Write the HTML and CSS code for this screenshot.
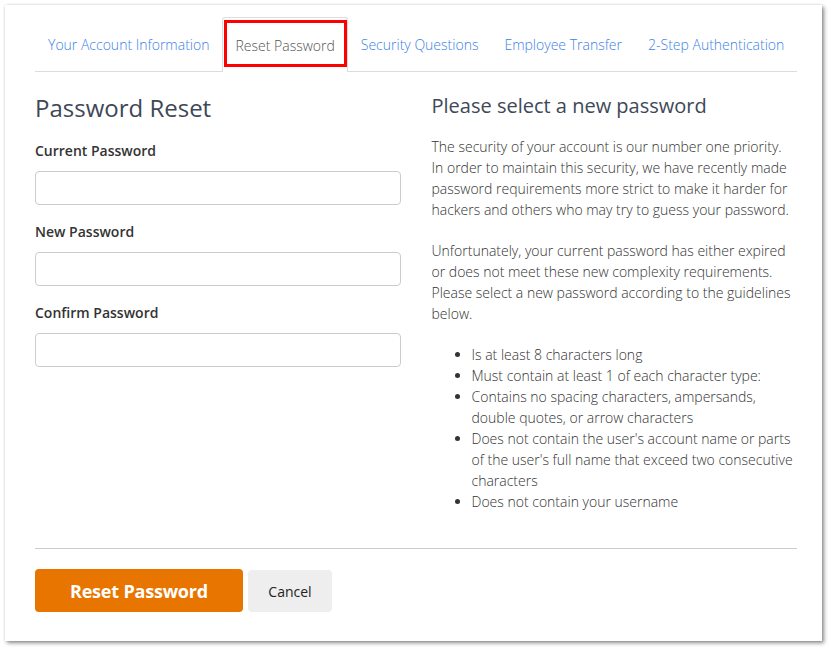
FILE: index.html
```html
<!DOCTYPE html>
<html>
<head>
<meta charset="utf-8">
<link rel="stylesheet" href="styles.css">
</head>
<body>
<div class="card">
  <ul class="tabs">
    <li class="tab"><a>Your Account Information</a></li>
    <li class="tab active"><a>Reset Password</a><span class="highlight"></span></li>
    <li class="tab"><a>Security Questions</a></li>
    <li class="tab"><a>Employee Transfer</a></li>
    <li class="tab"><a>2-Step Authentication</a></li>
  </ul>
  <div class="columns">
    <div class="col form">
      <h1>Password Reset</h1>
      <label>Current Password</label>
      <input type="password" class="field">
      <label>New Password</label>
      <input type="password" class="field">
      <label>Confirm Password</label>
      <input type="password" class="field">
    </div>
    <div class="col info">
      <h2>Please select a new password</h2>
      <p>The security of your account is our number one priority. In order to maintain this security, we have recently made password requirements more strict to make it harder for hackers and others who may try to guess your password.</p>
      <p>Unfortunately, your current password has either expired or does not meet these new complexity requirements. Please select a new password according to the guidelines below.</p>
      <ul class="rules">
        <li>Is at least 8 characters long</li>
        <li>Must contain at least 1 of each character type:</li>
        <li>Contains no spacing characters, ampersands, double quotes, or arrow characters</li>
        <li>Does not contain the user's account name or parts of the user's full name that exceed two consecutive characters</li>
        <li>Does not contain your username</li>
      </ul>
    </div>
  </div>
  <div class="actions">
    <button class="btn primary">Reset Password</button>
    <button class="btn secondary">Cancel</button>
  </div>
</div>
</body>
</html>
```
FILE: styles.css
```css
* { box-sizing: border-box; }
html, body { margin: 0; padding: 0; background: #fff; }
body {
  font-family: "Open Sans", "Liberation Sans", sans-serif;
  color: #333;
  padding: 5px 9px 9px 5px;
}
.card {
  width: 817px;
  height: 636px;
  background: #fff;
  box-shadow: 2px 2px 4px rgba(0,0,0,0.45), 0 0 2px rgba(0,0,0,0.12);
  padding: 12px 25px 0 30px;
}
.tabs {
  list-style: none;
  margin: 0;
  padding: 0;
  display: flex;
  border-bottom: 1px solid #ddd;
  height: 55px;
}
.tab {
  position: relative;
  padding: 0 13px;
  display: flex;
  align-items: center;
  font-size: 14px;
  font-weight: 300;
  white-space: nowrap;
  color: #3d82e6;
  margin-bottom: -1px;
}
.tab.active {
  padding: 0 12px;
  border: 1px solid #ddd;
  border-bottom: none;
  border-radius: 3px 3px 0 0;
  background: #fff;
  color: #555;
  height: 55px;
}
.highlight {
  position: absolute;
  left: 1px;
  right: 0px;
  top: 2px;
  bottom: 5px;
  border: 3px solid #f00;
}
.columns {
  display: flex;
  gap: 31px;
  height: 476px;
}
.col { flex: 1 1 0; }
h1 {
  font-weight: 400;
  font-size: 24px;
  color: #3e4857;
  margin: 20px 0 17px;
  line-height: 32px;
}
h2 {
  font-weight: 400;
  font-size: 20px;
  color: #3e4857;
  margin: 20px 0 16px;
  line-height: 28px;
}
label {
  display: block;
  font-weight: 600;
  font-size: 14px;
  color: #333;
  line-height: 20px;
  margin-bottom: 10px;
}
.field {
  display: block;
  width: 100%;
  height: 34px;
  border: 1px solid #ccc;
  border-radius: 4px;
  margin: 0 0 17px;
  background: #fff;
}
.info p {
  font-size: 14px;
  font-weight: 300;
  line-height: 21px;
  margin: 0 0 20px;
  color: #333;
}
.rules {
  font-size: 14px;
  font-weight: 300;
  line-height: 21px;
  color: #333;
  margin: 0;
  padding-left: 40px;
}
.actions {
  border-top: 1px solid #ccc;
  padding-top: 20px;
  display: flex;
  gap: 5px;
  align-items: flex-start;
}
.btn {
  font-family: "Open Sans", "Liberation Sans", sans-serif;
  border: none;
  border-radius: 4px;
}
.primary {
  width: 208px;
  height: 43px;
  background: #e87500;
  color: #fff;
  font-weight: 700;
  font-size: 18px;
  letter-spacing: -0.2px;
}
.secondary {
  width: 84px;
  height: 42px;
  margin-top: 1px;
  background: #eee;
  color: #222;
  font-size: 14px;
}
```
